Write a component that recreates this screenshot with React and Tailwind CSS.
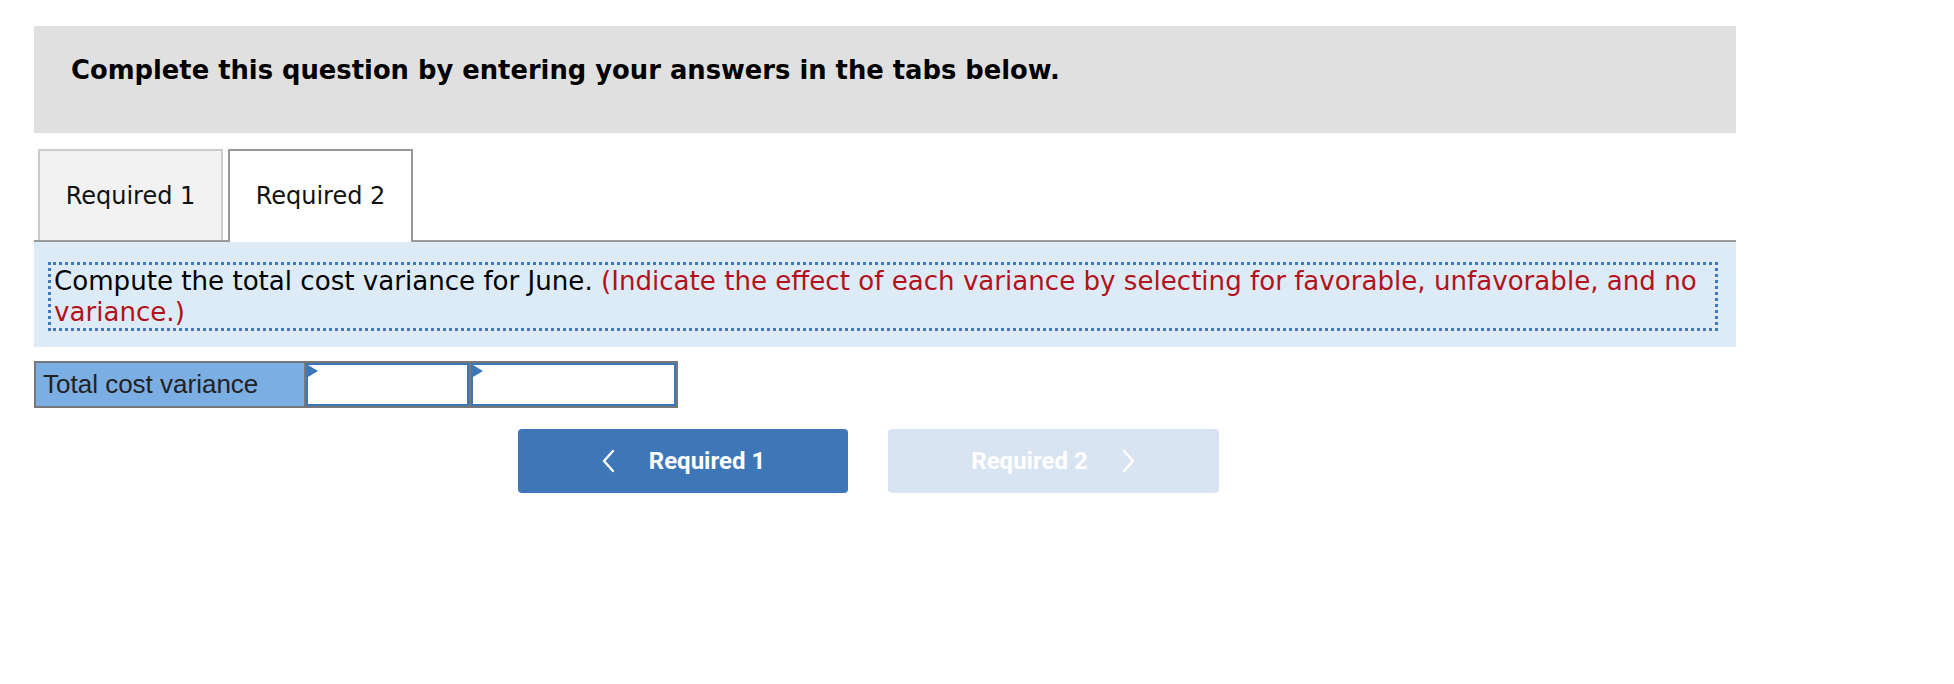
import React from "react";

function Chevron({ dir = "left" }) {
  return (
    <svg width="14" height="24" viewBox="0 0 14 24" fill="none">
      {dir === "left" ? (
        <path d="M12 2 L3 12 L12 22" stroke="white" strokeWidth="2.4" strokeLinecap="round" strokeLinejoin="round" />
      ) : (
        <path d="M2 2 L11 12 L2 22" stroke="white" strokeWidth="2.4" strokeLinecap="round" strokeLinejoin="round" />
      )}
    </svg>
  );
}

function InputCell({ w }) {
  return (
    <div className={`relative h-full bg-white border-2 border-[#3b77b9] ${w}`}>
      <svg className="absolute left-0 top-0" width="10" height="13" viewBox="0 0 10 13">
        <path d="M0 0 L10 6 L0 12 Z" fill="#3b77b9" />
      </svg>
    </div>
  );
}

export default function App() {
  return (
    <div className="w-[1954px] h-[684px] bg-white">
      <div className="ml-[34px] w-[1702px] pt-[26px]">
        <div className="h-[107px] bg-[#e0e0e0] pl-[37px] pt-[27px]">
          <h1 className="text-[25.8px] leading-[34px] font-bold text-black font-['DejaVu_Sans',Verdana,sans-serif]">
            Complete this question by entering your answers in the tabs below.
          </h1>
        </div>

        <div className="mt-[16px] flex items-start gap-[5px] pl-[4px] border-b-2 border-[#999]">
          <div className="h-[91px] w-[185px] bg-[#f2f2f2] border-2 border-b-0 border-[#cccccc] flex items-center justify-center">
            <span className="text-[24px] text-[#111] font-['DejaVu_Sans',Verdana,sans-serif]">Required 1</span>
          </div>
          <div className="relative -mb-[2px] h-[93px] w-[185px] bg-white border-2 border-b-0 border-[#999] flex items-center justify-center pb-[2px]">
            <span className="text-[24px] text-[#111] font-['DejaVu_Sans',Verdana,sans-serif]">Required 2</span>
          </div>
        </div>

        <div className="bg-[#ddebf7] pl-[14px] pr-[18px] pt-[20px] pb-[16px]">
          <p className="border-[3px] border-dotted border-[#4179c0] pl-[3px] pr-[6px] pt-[1px] text-[26.1px] leading-[31px] text-black font-['DejaVu_Sans',Verdana,sans-serif]">
            Compute the total cost variance for June.{" "}
            <span className="text-[#b3121c]">
              (Indicate the effect of each variance by selecting for favorable, unfavorable, and no variance.)
            </span>
          </p>
        </div>

        <div className="mt-[14px] flex h-[47px] w-[644px] border-2 border-[#777] bg-[#777]">
          <div className="w-[268px] h-full bg-[#7baee2] flex items-center pl-[7px] pr-[2px]">
            <span className="text-[26px] text-[#222] font-['Liberation_Sans',Arial,sans-serif]">Total cost variance</span>
          </div>
          <div className="w-[2px]" />
          <InputCell w="w-[163px]" />
          <div className="w-[2px]" />
          <InputCell w="flex-1" />
        </div>

        <div className="mt-[21px] ml-[484px] flex gap-[40px]">
          <button className="w-[330px] h-[64px] rounded-[4px] bg-[#3d77b8] flex items-center justify-center gap-[34px] text-white">
            <Chevron dir="left" />
            <span className="text-[24px] font-bold font-['Roboto',sans-serif]">Required 1</span>
          </button>
          <button className="w-[331px] h-[64px] rounded-[4px] bg-[#d8e4f1] flex items-center justify-center gap-[34px] text-white">
            <span className="text-[24px] font-bold font-['Roboto',sans-serif]">Required 2</span>
            <Chevron dir="right" />
          </button>
        </div>
      </div>
    </div>
  );
}
